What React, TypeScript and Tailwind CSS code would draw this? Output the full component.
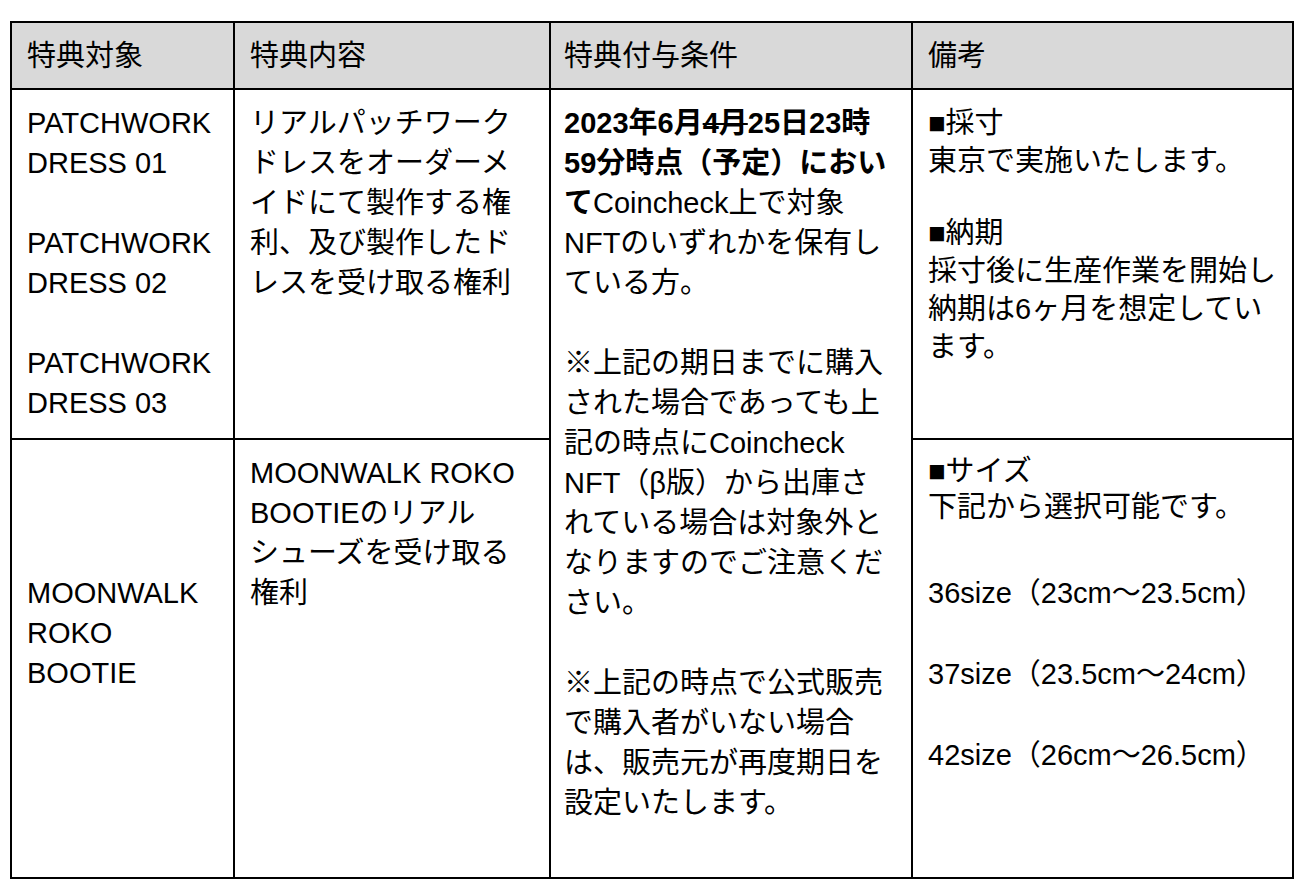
import React from "react";

const th = "border-2 border-black bg-[#d9d9d9] px-[15px] text-left align-middle font-normal h-[67px]";
const td = "border-2 border-black px-[15px] align-top";

export default function App() {
  return (
    <div className="min-h-screen bg-white pt-[21px] pl-[10px] text-black text-[29px] leading-[40px] font-[family-name:'Liberation_Sans','Noto_Sans_CJK_JP',sans-serif]">
      <table className="table-fixed border-collapse w-[1282px]">
        <colgroup>
          <col className="w-[223px]" />
          <col className="w-[316px]" />
          <col className="w-[362px]" />
          <col className="w-[381px]" />
        </colgroup>
        <thead>
          <tr>
            <th className={th}>特典対象</th>
            <th className={th}>特典内容</th>
            <th className={`${th} pl-[13px]`}>特典付与条件</th>
            <th className={th}>備考</th>
          </tr>
        </thead>
        <tbody>
          <tr>
            <td className={`${td} h-[350px] pt-[13px]`}>
              <div>PATCHWORK</div>
              <div>DRESS 01</div>
              <div className="mt-[40px]">PATCHWORK</div>
              <div>DRESS 02</div>
              <div className="mt-[40px]">PATCHWORK</div>
              <div>DRESS 03</div>
            </td>
            <td className={`${td} pt-[13px]`}>
              <div>リアルパッチワーク</div>
              <div>ドレスをオーダーメ</div>
              <div>イドにて製作する権</div>
              <div>利、及び製作したド</div>
              <div>レスを受け取る権利</div>
            </td>
            <td className={`${td} pt-[13px] pl-[13px]`} rowSpan={2}>
              <div className="font-bold">
                2023年6月<span className="line-through">4月</span>25日23時
              </div>
              <div className="font-bold">59分時点（予定）におい</div>
              <div>
                <span className="font-bold">て</span>Coincheck上で対象
              </div>
              <div>NFTのいずれかを保有し</div>
              <div>ている方。</div>
              <div className="mt-[40px]">※上記の期日までに購入</div>
              <div>された場合であっても上</div>
              <div>記の時点にCoincheck</div>
              <div>NFT（β版）から出庫さ</div>
              <div>れている場合は対象外と</div>
              <div>なりますのでご注意くだ</div>
              <div>さい。</div>
              <div className="mt-[40px]">※上記の時点で公式販売</div>
              <div>で購入者がいない場合</div>
              <div>は、販売元が再度期日を</div>
              <div>設定いたします。</div>
            </td>
            <td className={`${td} pt-[14px] leading-[38px]`}>
              <div>■採寸</div>
              <div>東京で実施いたします。</div>
              <div className="mt-[34px]">■納期</div>
              <div>採寸後に生産作業を開始し</div>
              <div>納期は6ヶ月を想定してい</div>
              <div>ます。</div>
            </td>
          </tr>
          <tr>
            <td className={`${td} h-[439px] pt-[133px]`}>
              <div>MOONWALK</div>
              <div>ROKO</div>
              <div>BOOTIE</div>
            </td>
            <td className={`${td} pt-[13px]`}>
              <div>MOONWALK ROKO</div>
              <div>BOOTIEのリアル</div>
              <div>シューズを受け取る</div>
              <div>権利</div>
            </td>
            <td className={`${td} pt-[13px]`}>
              <div className="leading-[36px]">■サイズ</div>
              <div className="leading-[36px]">下記から選択可能です。</div>
              <div className="mt-[48px]">36size（23cm〜23.5cm）</div>
              <div className="mt-[41px]">37size（23.5cm〜24cm）</div>
              <div className="mt-[41px]">42size（26cm〜26.5cm）</div>
            </td>
          </tr>
        </tbody>
      </table>
    </div>
  );
}
